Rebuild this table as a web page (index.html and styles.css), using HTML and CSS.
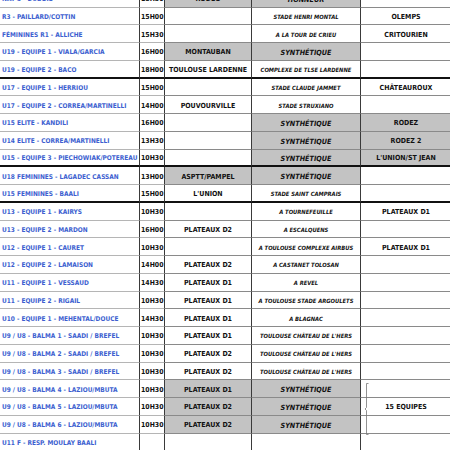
FILE: index.html
```html
<!DOCTYPE html>
<html lang="fr">
<head>
<meta charset="utf-8">
<title>Planning</title>
<link rel="stylesheet" href="styles.css">
</head>
<body>
<div class="sheet">
  <div class="r"><span class="c team">NAT 3 - DUBOIS</span><span class="c time">18H30</span><span class="c club g">RODEO</span><span class="c venue big g">HONNEUR</span><span class="c opp"></span></div>
  <div class="r"><span class="c team">R3 - PAILLARD/COTTIN</span><span class="c time">15H00</span><span class="c club"></span><span class="c venue">STADE HENRI MONTAL</span><span class="c opp">OLEMPS</span></div>
  <div class="r"><span class="c team">FÉMININES R1 - ALLICHE</span><span class="c time">15H30</span><span class="c club"></span><span class="c venue">A LA TOUR DE CRIEU</span><span class="c opp">CRITOURIEN</span></div>
  <div class="r"><span class="c team">U19 - EQUIPE 1 - VIALA/GARCIA</span><span class="c time">16H00</span><span class="c club g">MONTAUBAN</span><span class="c venue big g">SYNTHÉTIQUE</span><span class="c opp"></span></div>
  <div class="r thick"><span class="c team">U19 - EQUIPE 2 - BACO</span><span class="c time">18H00</span><span class="c club">TOULOUSE LARDENNE</span><span class="c venue">COMPLEXE DE TLSE LARDENNE</span><span class="c opp"></span></div>
  <div class="r"><span class="c team">U17 - EQUIPE 1 - HERRIOU</span><span class="c time">15H00</span><span class="c club"></span><span class="c venue">STADE CLAUDE JAMMET</span><span class="c opp">CHÂTEAUROUX</span></div>
  <div class="r"><span class="c team">U17 - EQUIPE 2 - CORREA/MARTINELLI</span><span class="c time">14H00</span><span class="c club">POUVOURVILLE</span><span class="c venue">STADE STRUXIANO</span><span class="c opp"></span></div>
  <div class="r"><span class="c team">U15 ELITE - KANDILI</span><span class="c time">16H00</span><span class="c club"></span><span class="c venue big g">SYNTHÉTIQUE</span><span class="c opp g">RODEZ</span></div>
  <div class="r"><span class="c team">U14 ELITE - CORREA/MARTINELLI</span><span class="c time">13H30</span><span class="c club"></span><span class="c venue big g">SYNTHÉTIQUE</span><span class="c opp g">RODEZ 2</span></div>
  <div class="r thick"><span class="c team">U15 - EQUIPE 3 - PIECHOWIAK/POTEREAU</span><span class="c time">10H30</span><span class="c club"></span><span class="c venue big g">SYNTHÉTIQUE</span><span class="c opp g">L'UNION/ST JEAN</span></div>
  <div class="r"><span class="c team">U18 FEMININES - LAGADEC CASSAN</span><span class="c time">13H00</span><span class="c club g">ASPTT/PAMPEL</span><span class="c venue big g">SYNTHÉTIQUE</span><span class="c opp"></span></div>
  <div class="r thick"><span class="c team">U15 FEMININES - BAALI</span><span class="c time">15H00</span><span class="c club">L'UNION</span><span class="c venue">STADE SAINT CAMPRAIS</span><span class="c opp"></span></div>
  <div class="r"><span class="c team">U13 - EQUIPE 1 - KAIRYS</span><span class="c time">10H30</span><span class="c club"></span><span class="c venue">A TOURNEFEUILLE</span><span class="c opp">PLATEAUX D1</span></div>
  <div class="r"><span class="c team">U13 - EQUIPE 2 - MARDON</span><span class="c time">16H00</span><span class="c club">PLATEAUX D2</span><span class="c venue">A ESCALQUENS</span><span class="c opp"></span></div>
  <div class="r"><span class="c team">U12 - EQUIPE 1 - CAURET</span><span class="c time">10H30</span><span class="c club"></span><span class="c venue">A TOULOUSE COMPLEXE AIRBUS</span><span class="c opp">PLATEAUX D1</span></div>
  <div class="r"><span class="c team">U12 - EQUIPE 2 - LAMAISON</span><span class="c time">14H00</span><span class="c club">PLATEAUX D2</span><span class="c venue">A CASTANET TOLOSAN</span><span class="c opp"></span></div>
  <div class="r"><span class="c team">U11 - EQUIPE 1 - VESSAUD</span><span class="c time">14H30</span><span class="c club">PLATEAUX D1</span><span class="c venue">A REVEL</span><span class="c opp"></span></div>
  <div class="r"><span class="c team">U11 - EQUIPE 2 - RIGAIL</span><span class="c time">10H30</span><span class="c club">PLATEAUX D1</span><span class="c venue">A TOULOUSE STADE ARGOULETS</span><span class="c opp"></span></div>
  <div class="r"><span class="c team">U10 - EQUIPE 1 - MEHENTAL/DOUCE</span><span class="c time">14H30</span><span class="c club">PLATEAUX D1</span><span class="c venue">A BLAGNAC</span><span class="c opp"></span></div>
  <div class="r"><span class="c team">U9 / U8 - BALMA 1 - SAADI / BREFEL</span><span class="c time">10H30</span><span class="c club">PLATEAUX D1</span><span class="c venue light">TOULOUSE CHÂTEAU DE L'HERS</span><span class="c opp"></span></div>
  <div class="r"><span class="c team">U9 / U8 - BALMA 2 - SAADI / BREFEL</span><span class="c time">10H30</span><span class="c club">PLATEAUX D2</span><span class="c venue light">TOULOUSE CHÂTEAU DE L'HERS</span><span class="c opp"></span></div>
  <div class="r"><span class="c team">U9 / U8 - BALMA 3 - SAADI / BREFEL</span><span class="c time">10H30</span><span class="c club">PLATEAUX D2</span><span class="c venue light">TOULOUSE CHÂTEAU DE L'HERS</span><span class="c opp"></span></div>
  <div class="r"><span class="c team">U9 / U8 - BALMA 4 - LAZIOU/MBUTA</span><span class="c time">10H30</span><span class="c club g">PLATEAUX D1</span><span class="c venue big g">SYNTHÉTIQUE</span><span class="c opp brace-host"><svg class="brace" width="8" height="52" viewBox="0 0 8 52"><path d="M6.5 0.5 H4.5 V24.5 L3 26 L4.5 27.5 V51.5 H6.5" fill="none" stroke="#777" stroke-width="0.8"/></svg></span></div>
  <div class="r"><span class="c team">U9 / U8 - BALMA 5 - LAZIOU/MBUTA</span><span class="c time">10H30</span><span class="c club g">PLATEAUX D2</span><span class="c venue big g">SYNTHÉTIQUE</span><span class="c opp">15 EQUIPES</span></div>
  <div class="r"><span class="c team">U9 / U8 - BALMA 6 - LAZIOU/MBUTA</span><span class="c time">10H30</span><span class="c club g">PLATEAUX D2</span><span class="c venue big g">SYNTHÉTIQUE</span><span class="c opp"></span></div>
  <div class="r"><span class="c team">U11 F - RESP. MOULAY BAALI</span><span class="c time"></span><span class="c club"></span><span class="c venue"></span><span class="c opp"></span></div>
</div>
</body>
</html>
```

FILE: styles.css
```css
html, body {
  margin: 0;
  padding: 0;
  overflow: hidden;
  background: #fff;
}

.sheet {
  display: grid;
  grid-template-columns: 140px 25px 87px 109px 1fr;
  grid-auto-rows: 17.75px;
  margin-top: -10.25px;
  width: 452px;
}

.r {
  display: contents;
}

.c {
  display: flex;
  align-items: center;
  justify-content: center;
  padding-top: 2px;
  box-sizing: border-box;
  border-right: 1px solid #3a3a3a;
  border-bottom: 1px solid #8a8a8a;
  white-space: nowrap;
  overflow: hidden;
  font-family: "DejaVu Sans Condensed", "DejaVu Sans", sans-serif;
  font-stretch: condensed;
  font-weight: bold;
  color: #111;
}

.team {
  justify-content: flex-start;
  padding-left: 2px;
  font-size: 6.5px;
  color: #3d5fd0;
  border-bottom-color: #b5b5b5;
}

.time {
  justify-content: flex-start;
  padding-left: 1px;
  font-size: 6.9px;
  border-bottom-color: #b5b5b5;
}

.club {
  font-size: 7px;
}

.venue {
  font-size: 5.8px;
  font-style: italic;
}

.venue.big {
  font-size: 7.2px;
}

.venue.light {
  font-weight: 600;
}

.opp {
  font-size: 7px;
}

.g {
  background: #c3c3c3;
}

.thick > .c {
  border-bottom: 2px solid #111;
}

.brace-host {
  position: relative;
  overflow: visible;
}

.brace {
  position: absolute;
  left: 1px;
  top: 3px;
}
```
